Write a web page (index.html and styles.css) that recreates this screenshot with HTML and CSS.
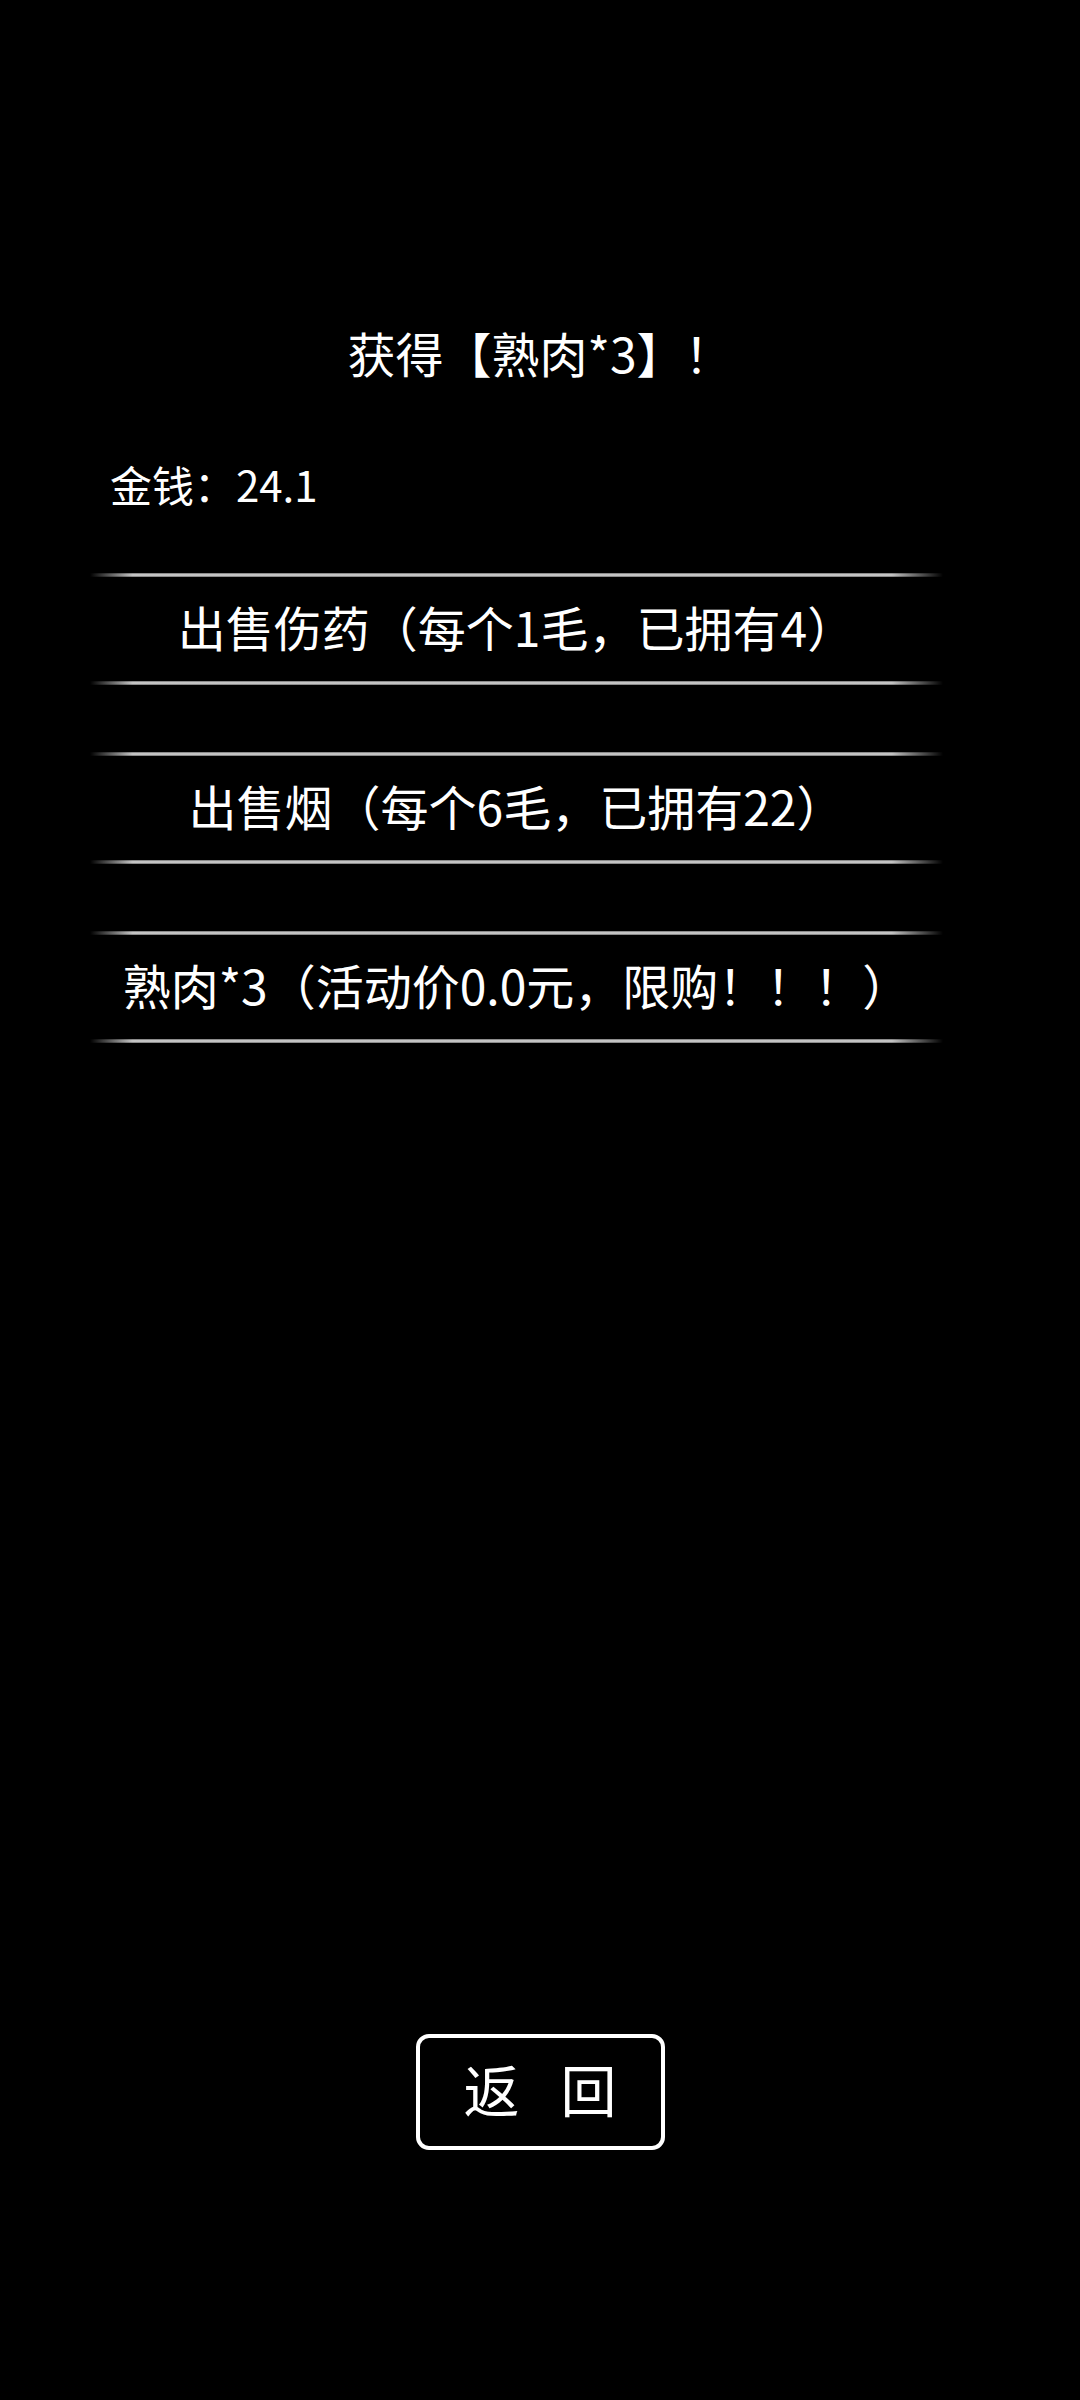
FILE: index.html
```html
<!DOCTYPE html>
<html lang="zh-CN">
<head>
<meta charset="utf-8">
<title>商店</title>
<link rel="stylesheet" href="styles.css">
</head>
<body>
<div class="screen">
  <div class="title">获得【熟肉*3】！</div>
  <div class="money">金钱：24.1</div>
  <div class="list">
    <div class="item">出售伤药（每个1毛，已拥有4）</div>
    <div class="item">出售烟（每个6毛，已拥有22）</div>
    <div class="item">熟肉*3（活动价0.0元，限购！！！）</div>
  </div>
  <div class="spacer"></div>
  <div class="footer">
    <div class="back-btn"><span>返</span><span>回</span></div>
  </div>
</div>
</body>
</html>
```

FILE: styles.css
```css
html, body {
  margin: 0;
  padding: 0;
  background: #000;
}

.screen {
  width: 1080px;
  height: 2400px;
  display: flex;
  flex-direction: column;
  background: #000;
  color: #fff;
  font-family: "Noto Sans CJK SC", "Noto Sans", sans-serif;
}

.title {
  margin-top: 324px;
  font-size: 48px;
  line-height: 56px;
  text-align: center;
}

.money {
  margin-top: 78px;
  padding-left: 110px;
  font-size: 42px;
  line-height: 52px;
}

.list {
  margin-top: 63px;
  margin-left: 90px;
  width: 853px;
  display: flex;
  flex-direction: column;
  gap: 67px;
}

.item {
  position: relative;
  box-sizing: border-box;
  height: 112px;
  padding-bottom: 6px;
  display: flex;
  align-items: center;
  justify-content: center;
  font-size: 48px;
  white-space: nowrap;
}

.item::before,
.item::after {
  content: "";
  position: absolute;
  left: 0;
  right: 0;
  height: 4px;
  background:
    linear-gradient(to right, #000 0%, rgba(0,0,0,0) 5%, rgba(0,0,0,0) 94%, #000 100%),
    linear-gradient(to bottom, #6f6f6f 0%, #d4d4d4 45%, #c9c9c9 60%, #6f6f6f 100%);
}

.item::before { top: 0; }
.item::after { bottom: 0; }

.spacer {
  flex: 1;
}

.footer {
  display: flex;
  justify-content: center;
  margin-bottom: 250px;
}

.back-btn {
  box-sizing: border-box;
  width: 249px;
  height: 116px;
  padding-bottom: 8px;
  border: 4px solid #fff;
  border-radius: 13px;
  display: flex;
  align-items: center;
  justify-content: center;
  gap: 41px;
  font-size: 56px;
  line-height: 1;
}
```
